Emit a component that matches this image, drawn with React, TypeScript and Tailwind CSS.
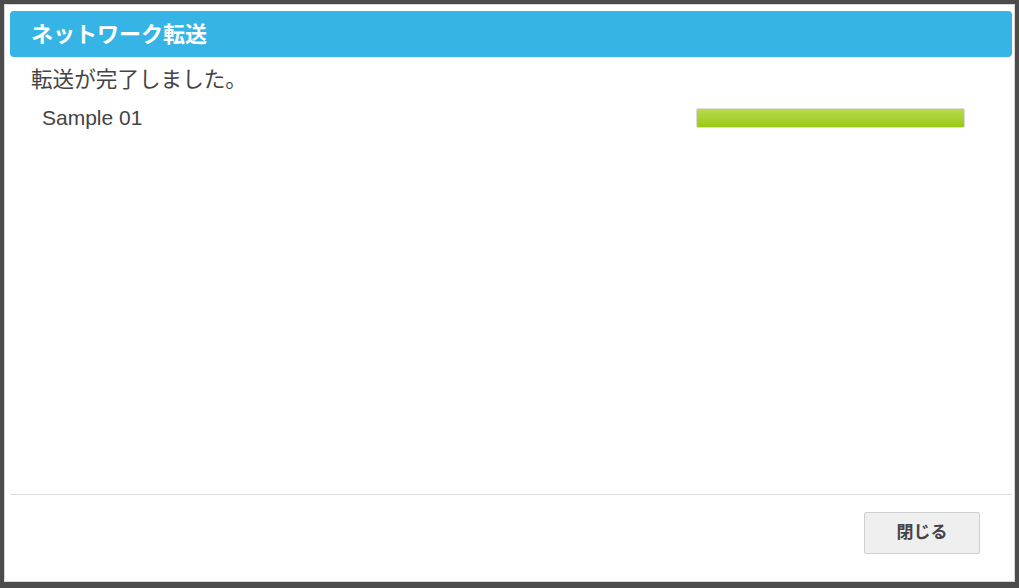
export default function App() {
  return (
    <div
      className="h-[588px] w-[1019px] bg-[#4b4b4b] pt-[4px] pl-[4px] pr-[4px] pb-[6px]"
      style={{ fontFamily: '"Liberation Sans", "Noto Sans CJK JP", sans-serif' }}
    >
      <div className="flex h-full flex-col bg-white pt-[7px] pl-[6px] pr-[3px] shadow-[inset_0_0_0_1px_#d8d8d8]">
        <div className="flex h-[46px] items-center rounded-[4px] bg-[#36b4e5] pl-[21px]">
          <span className="text-[22px] font-bold text-white">ネットワーク転送</span>
        </div>
        <div className="flex-1 pt-[9px]">
          <div className="pl-[21px] text-[21.6px] leading-[28px] text-[#444]">転送が完了しました。</div>
          <div className="mt-[10px] flex items-center pl-[32px]">
            <span className="flex-1 text-[21px] leading-[28px] text-[#444]">Sample 01</span>
            <div className="mr-[47px] h-[20px] w-[269px] rounded-[2px] border border-[#dcdcdc] bg-gradient-to-b from-[#b6db48] to-[#9cc912]" />
          </div>
        </div>
        <div className="h-[88px] border-t border-[#dcdcdc]">
          <div className="flex justify-end pt-[17px] pr-[32px]">
            <button className="h-[42px] w-[116px] rounded-[2px] border border-[#cfcfcf] bg-[#efefef] text-[17px] font-bold text-[#444]">
              閉じる
            </button>
          </div>
        </div>
      </div>
    </div>
  );
}
